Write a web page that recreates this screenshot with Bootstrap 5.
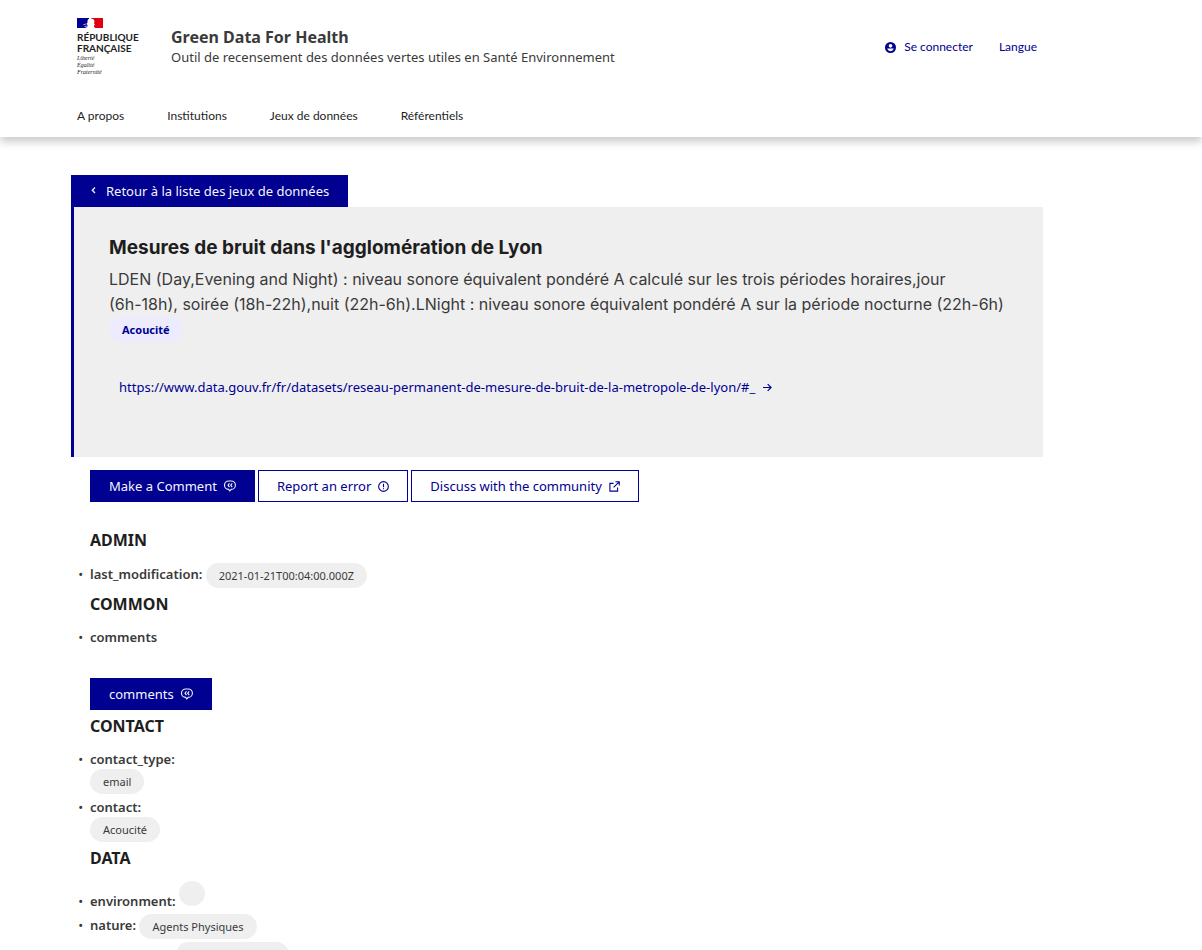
<!DOCTYPE html>
<html lang="fr">
<head>
<meta charset="utf-8">
<meta name="viewport" content="width=device-width, initial-scale=1">
<title>Green Data For Health</title>
<link href="https://cdn.jsdelivr.net/npm/bootstrap@5.3.0/dist/css/bootstrap.min.css" rel="stylesheet">
<style>
:root { --blue: #000091; --grey: #efefef; }
body { font-family: "Noto Sans", sans-serif; font-size: 13px; line-height: 20px; color: #3a3a3a; }
a { text-decoration: none; color: var(--blue); }
svg { fill: none; stroke: currentColor; flex: none; }
svg.solid { stroke: none; }
.site-header { box-shadow: 0 5px 8px rgba(0,0,0,.2); padding: 16px 0 11px; }
.wrap { margin-left: 71px; margin-right: 16px; max-width: 972px; }
.inner { padding: 0 6px; }
.brand { width: 94px; color: #1e1e1e; }
.state { font: 700 10px/11px Lato, sans-serif; margin-top: 2px; }
.motto { font: italic 6px/7px "Liberation Serif", serif; margin-top: 1px; }
.titles { padding-top: 11px; }
.site-name { font-size: 16px; line-height: 20px; }
.tools, .menu { font-family: Lato, sans-serif; font-size: 12px; line-height: 20px; }
.menu { gap: 43px; margin-top: 30px; }
.menu a { color: #1e1e1e; }
.tools { gap: 26px; padding-top: 21px; }
.btn { --bs-btn-border-radius: 0; --bs-btn-font-size: 13px; --bs-btn-line-height: 20px; --bs-btn-padding-x: 18px; --bs-btn-padding-y: 5px; --bs-btn-border-color: var(--blue); --bs-btn-hover-border-color: var(--blue); gap: 7px; }
.btn-full { --bs-btn-color: #f5f5fe; --bs-btn-bg: var(--blue); --bs-btn-hover-color: #fff; --bs-btn-hover-bg: #1212ff; }
.btn-line { --bs-btn-color: var(--blue); --bs-btn-bg: #fff; --bs-btn-hover-color: var(--blue); --bs-btn-hover-bg: #f6f6f6; }
.main-top { padding-top: 38px; }
.callout { background: var(--grey); border-left: 3px solid var(--blue); padding: 28px 35px 60px; }
.callout h1 { font: 700 19px/26px Inter, sans-serif; color: #1e1e1e; margin-bottom: 6px; }
.callout p { font: 16px/25px Inter, sans-serif; }
.pill { display: inline-block; height: 25px; min-width: 26px; border-radius: 13px; padding: 0 13px; background: var(--grey); font-size: 11px; line-height: 26px; vertical-align: middle; }
.pill-tag { background: #ececfe; color: var(--blue); font-weight: 700; }
.pill-empty { vertical-align: baseline; }
.pill-next { width: 113px; margin-left: 86px; }
.source { margin: 35px 0 0 10px; }
.details { padding-left: 19px; }
.details h2 { font-size: 16px; line-height: 22px; font-weight: 700; color: #1e1e1e; margin: 0; }
.actions { gap: 3px; margin: 13px 0 27px; }
.fields { padding: 12px 0 2px; margin: 0; }
.fields li { margin-bottom: 3px; }
.fields li::marker { content: "•\a0\a0"; }
.fields b { font-weight: 600; }
.open-comments { margin: 26px 0 5px; }
</style>
</head>
<body>
<div class="vh-100 overflow-hidden">
<header class="site-header">
  <div class="wrap"><div class="inner">
    <div class="d-flex">
      <a href="#" class="brand">
        <svg class="solid d-block" width="26" height="14" viewBox="0 0 26 14"><path fill="#000091" d="M0 2h12v10H0z"/><path fill="#e1000f" d="M14 2h12v10H14z"/><path fill="#fff" d="M8 12q3-1 2.500-3L9.500 8l1-1.500Q10 3 13 2.500q4-.5 4.500 3L17 7.500l1 1-1 1q-.5 1.500 1.500 2.500z"/><path fill="#a9a9dc" d="M6 8.500l3-1 .5.800-3 1zM7 10.500l3-1 .5.800-2.500 1z"/></svg>
        <div class="state">RÉPUBLIQUE<br>FRANÇAISE</div>
        <div class="motto">Liberté<br>Égalité<br>Fraternité</div>
      </a>
      <div class="titles flex-grow-1">
        <div class="site-name fw-bold">Green Data For Health</div>
        <div>Outil de recensement des données vertes utiles en Santé Environnement</div>
      </div>
      <div class="tools d-flex align-items-start">
        <a href="#" class="d-flex align-items-center gap-2"><svg class="solid" width="11" height="11" viewBox="0 0 12 12"><circle cx="6" cy="6" r="6" fill="currentColor"/><circle cx="6" cy="4.200" r="2" fill="#fff"/><path fill="#fff" d="M2.300 7.100h7.400Q8.600 10 6 10T2.300 7.100z"/></svg>Se connecter</a>
        <a href="#">Langue</a>
      </div>
    </div>
    <nav class="menu d-flex"><a href="#">A propos</a><a href="#">Institutions</a><a href="#">Jeux de données</a><a href="#">Référentiels</a></nav>
  </div></div>
</header>
<main class="wrap main-top">
  <a href="#" class="btn btn-full d-inline-flex align-items-center gap-2"><svg width="8" height="10" viewBox="0 0 8 10" stroke-width="1.300"><path d="M5 1.500 2.300 4.200 5 7"/></svg>Retour à la liste des jeux de données</a>
  <section class="callout">
    <h1>Mesures de bruit dans l'agglomération de Lyon</h1>
    <p class="m-0">LDEN (Day,Evening and Night) : niveau sonore équivalent pondéré A calculé sur les trois périodes horaires,jour <span class="text-nowrap">(6h-18h)</span>, soirée (18h-22h),nuit (22h-6h).LNight : niveau sonore équivalent pondéré A sur la période nocturne (22h-6h)</p>
    <div class="d-flex"><span class="pill pill-tag">Acoucité</span></div>
    <a href="#" class="source d-flex align-items-center gap-2">https://www.data.gouv.fr/fr/datasets/reseau-permanent-de-mesure-de-bruit-de-la-metropole-de-lyon/#_<svg width="9" height="9" viewBox="0 0 10 10" stroke-width="1.300"><path d="M0 5h9M5.200 1.200 9 5 5.200 8.800"/></svg></a>
  </section>
  <div class="details">
    <div class="actions d-flex flex-wrap">
      <button type="button" class="btn btn-full d-inline-flex align-items-center">Make a Comment<svg width="12" height="12" viewBox="0 0 12 12" stroke-width="1.100"><path d="M4.600 9.400A4.200 4.200 0 0 1 4.800 1h2.400a4.200 4.200 0 0 1 0 8.400L5.800 11zM5.500 3.300 4 5.200l1.500 1.900M8.200 3.300 6.700 5.200l1.500 1.900"/></svg></button>
      <button type="button" class="btn btn-line d-inline-flex align-items-center">Report an error<svg width="11" height="11" viewBox="0 0 12 12" stroke-width="1.200"><circle cx="6" cy="6" r="5.300"/><path d="M6 3v3.700M6 7.800V9"/></svg></button>
      <button type="button" class="btn btn-line d-inline-flex align-items-center">Discuss with the community<svg width="11" height="11" viewBox="0 0 12 12" stroke-width="1.200"><path d="M5 2.600H1V11h8.400V7M7 .8h4.200V5M11 1 5 7"/></svg></button>
    </div>
    <h2>ADMIN</h2>
    <ul class="fields"><li><b>last_modification:</b> <span class="pill">2021-01-21T00:04:00.000Z</span></li></ul>
    <h2>COMMON</h2>
    <ul class="fields"><li><b>comments</b></li></ul>
    <button type="button" class="btn btn-full open-comments d-flex align-items-center">comments<svg width="12" height="12" viewBox="0 0 12 12" stroke-width="1.100"><path d="M4.600 9.400A4.200 4.200 0 0 1 4.800 1h2.400a4.200 4.200 0 0 1 0 8.400L5.800 11zM5.500 3.300 4 5.200l1.500 1.900M8.200 3.300 6.700 5.200l1.500 1.900"/></svg></button>
    <h2>CONTACT</h2>
    <ul class="fields">
      <li><b>contact_type:</b><div class="d-flex"><span class="pill">email</span></div></li>
      <li><b>contact:</b><div class="d-flex"><span class="pill">Acoucité</span></div></li>
    </ul>
    <h2>DATA</h2>
    <ul class="fields">
      <li><b>environment:</b> <span class="pill pill-empty"></span></li>
      <li><b>nature:</b> <span class="pill">Agents Physiques</span></li>
      <li><span class="pill pill-empty pill-next"></span></li>
    </ul>
  </div>
</main>
</div>
</body>
</html>
